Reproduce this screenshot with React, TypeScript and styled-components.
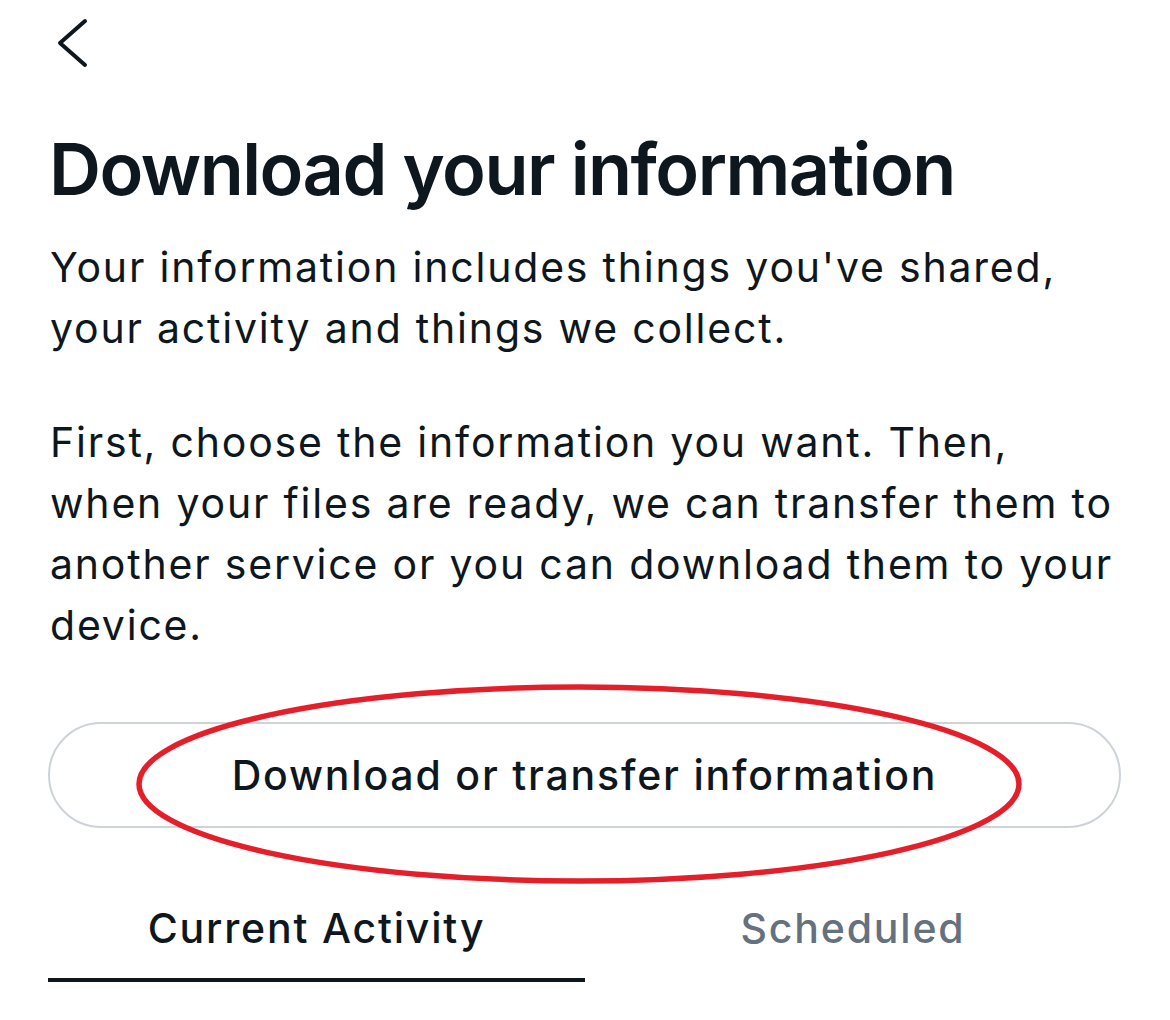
import React, { useState } from 'react';
import styled, { createGlobalStyle } from 'styled-components';

const GlobalStyle = createGlobalStyle`
    html, body { margin: 0; padding: 0; background: #ffffff; }
    body { font-family: Inter, "Noto Sans", "Liberation Sans", sans-serif; color: #0d171d; }
`;

const tabs = ['Current Activity', 'Scheduled'];

const App: React.FC = () => {
    const [active, setActive] = useState(0);

    return (
        <>
            <GlobalStyle />
            <Page>
                <BackButton aria-label="Back">
                    <svg width="34" height="50" viewBox="0 0 34 50" fill="none">
                        <path d="M29 3 L4 25 L29 47" stroke="#0d171d" strokeWidth="4" strokeLinecap="round" strokeLinejoin="round" />
                    </svg>
                </BackButton>

                <Title>Download your information</Title>
                <Paragraph>Your information includes things you've shared, your activity and things we collect.</Paragraph>
                <Paragraph>First, choose the information you want. Then, when your files are ready, we can transfer them to another service or you can download them to your device.</Paragraph>

                <ButtonWrap>
                    <PillButton>Download or transfer information</PillButton>
                    {/* red hand-drawn annotation round the button */}
                    <Annotation viewBox="0 0 890 204" preserveAspectRatio="none">
                        <ellipse cx="445" cy="102" rx="440" ry="97" stroke="#e51f2a" strokeWidth="5.5" fill="none" />
                    </Annotation>
                </ButtonWrap>

                <Tabs>
                    {tabs.map((t, i) => (
                        <Tab key={t} $active={i === active} onClick={() => setActive(i)}>{t}</Tab>
                    ))}
                </Tabs>
            </Page>
        </>
    );
};

const Page = styled.div`
    width: 1170px;
    height: 1020px;
    box-sizing: border-box;
    padding: 18px 49px 0 48px;
    display: flex;
    flex-direction: column;
    overflow: hidden;
`;

const BackButton = styled.button`
    background: none; border: none; padding: 0; margin: 0 0 0 8px; cursor: pointer;
    width: 34px; height: 50px; display: flex; flex-shrink: 0;
`;

const Title = styled.h1`
    margin: 57px 0 0 1px;
    font-size: 72px;
    line-height: 88px;
    font-weight: 600;
    letter-spacing: -1.5px;
    color: #0d171d;
    white-space: nowrap;
`;

const Paragraph = styled.p`
    margin: 24px 0 0 2px;
    font-size: 41px;
    line-height: 61px;
    font-weight: 400;
    letter-spacing: 1.8px;
    color: #0d171d;
    & + & { margin-top: 53px; }
`;

const ButtonWrap = styled.div`
    position: relative;
    margin-top: 66px;
`;

const PillButton = styled.button`
    width: 100%;
    height: 106px;
    border: 2px solid #cdd3d9;
    border-radius: 53px;
    background: #ffffff;
    font-family: inherit;
    font-size: 41px;
    font-weight: 500;
    letter-spacing: 1.8px;
    color: #0d171d;
    cursor: pointer;
`;

const Annotation = styled.svg`
    position: absolute;
    left: 86px;
    top: -40px;
    width: 890px;
    height: 204px;
    pointer-events: none;
    overflow: visible;
`;

const Tabs = styled.div`
    display: grid;
    grid-template-columns: 537px 1fr;
    margin-top: 75px;
`;

const Tab = styled.button<{ $active: boolean }>`
    background: none;
    border: none;
    padding: 0 0 25px;
    font-family: inherit;
    font-size: 41px;
    line-height: 50px;
    font-weight: 500;
    letter-spacing: 1.8px;
    color: ${({ $active }) => ($active ? '#0d171d' : '#65717e')};
    border-bottom: 4px solid ${({ $active }) => ($active ? '#0d171d' : 'transparent')};
    cursor: pointer;
`;

export default App;
